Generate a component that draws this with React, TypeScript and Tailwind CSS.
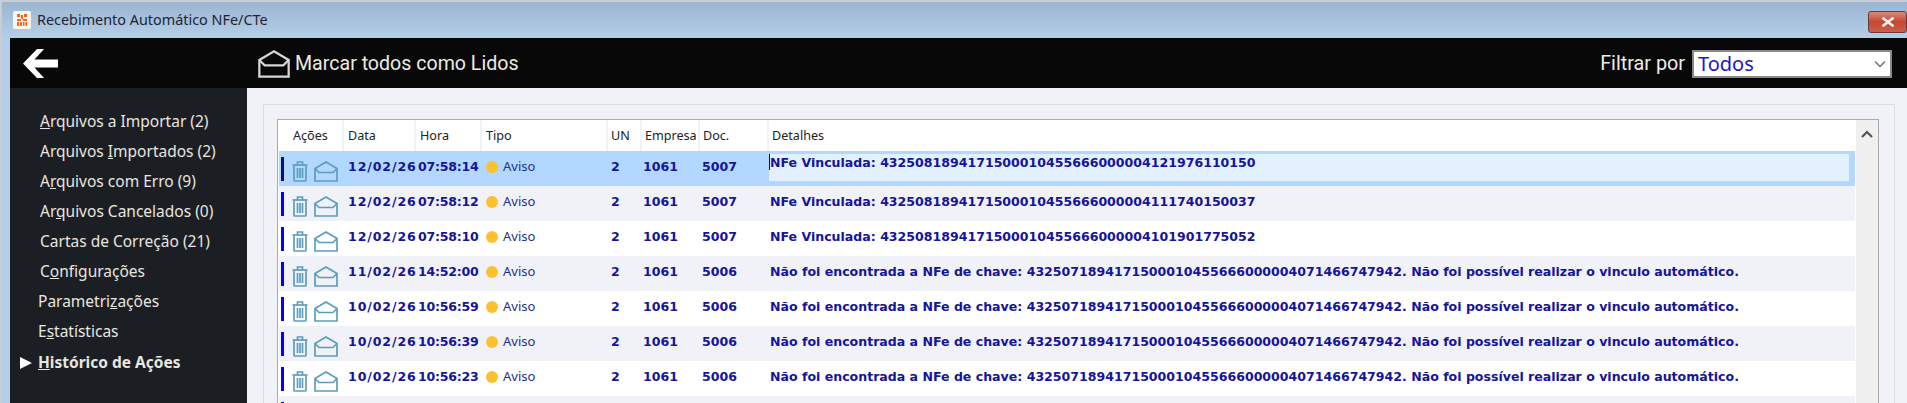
const MENU = [
  { pre: "", key: "A", post: "rquivos a Importar (2)", indent: "pl-[30px]" },
  { pre: "Arquivos ", key: "I", post: "mportados (2)", indent: "pl-[30px]" },
  { pre: "A", key: "r", post: "quivos com Erro (9)", indent: "pl-[30px]" },
  { pre: "Ar", key: "q", post: "uivos Cancelados (0)", indent: "pl-[30px]" },
  { pre: "Cartas de Correção (21)", key: "", post: "", indent: "pl-[30px]" },
  { pre: "C", key: "o", post: "nfigurações", indent: "pl-[30px]" },
  { pre: "Parametri", key: "z", post: "ações", indent: "pl-[28px]" },
  { pre: "E", key: "s", post: "tatísticas", indent: "pl-[28px]" },
];

const LONG = "Não foi encontrada a NFe de chave: 4325071894171500010455666000004071466747942. Não foi possível realizar o vinculo automático.";

const ROWS = [
  { date: "12/02/26", time: "07:58:14", doc: "5007", text: "NFe Vinculada: 4325081894171500010455666000004121976110150" },
  { date: "12/02/26", time: "07:58:12", doc: "5007", text: "NFe Vinculada: 4325081894171500010455666000004111740150037" },
  { date: "12/02/26", time: "07:58:10", doc: "5007", text: "NFe Vinculada: 4325081894171500010455666000004101901775052" },
  { date: "11/02/26", time: "14:52:00", doc: "5006", text: LONG },
  { date: "10/02/26", time: "10:56:59", doc: "5006", text: LONG },
  { date: "10/02/26", time: "10:56:39", doc: "5006", text: LONG },
  { date: "10/02/26", time: "10:56:23", doc: "5006", text: LONG },
];

const COLS = "grid grid-cols-[65px_72px_66px_126px_34px_58px_69px_1fr]";

function OpenEnvelope({ className }: { className: string }) {
  return (
    <svg viewBox="0 0 24 21" fill="none" stroke="currentColor" strokeWidth="1.7" className={className}>
      <path d="M1 7.5 L12 1 L23 7.5 V20 H1 Z" />
      <path d="M1 7.5 L5 11.5 H19 L23 7.5" />
    </svg>
  );
}

function Trash() {
  return (
    <svg viewBox="0 0 16 21" fill="none" stroke="currentColor" strokeWidth="1.7" className="h-[21px] w-4 text-[#5c9dbd]">
      <path d="M0.5 4 H15.5" />
      <path d="M5.5 4 V1 H10.5 V4" />
      <path d="M2 4.5 V19 Q2 20 3 20 H13 Q14 20 14 19 V4.5" />
      <path d="M5.5 7 V17 M8 7 V17 M10.5 7 V17" strokeWidth="1.7" />
    </svg>
  );
}

function Row({ row, index }: { row: (typeof ROWS)[number]; index: number }) {
  const selected = index === 0;
  const bg = selected ? "bg-[#b3d8ff]" : index % 2 === 1 ? "bg-[#f1f2f8]" : "bg-white";

  return (
    <div className={`${COLS} h-[35px] shrink-0 items-center pb-[3px] font-['DejaVu_Sans',sans-serif] text-[12.55px] font-bold text-[#14149c] ${bg}`}>
      <div className="flex h-[32px] items-start pl-[2px] pt-[6px]">
        <span className={`h-6 w-[3px] ${selected ? "bg-[#0c0c80]" : "bg-[#0000ff]"}`} />
        <div className="ml-2 mt-1 flex items-start gap-[6px]">
          <Trash />
          <OpenEnvelope className="h-[21px] w-6 text-[#5c9dbd]" />
        </div>
      </div>
      <span className="pl-1 tracking-[0.9px]">{row.date}</span>
      <span className="pl-[2px] tracking-[-0.25px]">{row.time}</span>
      <div className="flex items-center pl-1 font-['Noto_Sans',sans-serif] text-[13px] font-normal text-[#23308c]">
        <span className="h-3 w-3 rounded-full bg-[#fdc02f]" />
        <span className="ml-[5px]">Aviso</span>
      </div>
      <span className="pl-[3px]">2</span>
      <span className="pl-[1px]">1061</span>
      <span className="pl-[2px]">{row.doc}</span>
      {selected ? (
        <div className="relative mr-[6px] h-[27px] self-center bg-[#e3f0fd] pl-[1px] leading-[18px]">
          <span className="absolute left-0 top-0 h-4 w-px bg-[#111]" />
          {row.text}
        </div>
      ) : (
        <span className="pl-[1px]">{row.text}</span>
      )}
    </div>
  );
}

export default function App() {
  return (
    <div className="flex h-[403px] w-full flex-col overflow-hidden border-l-2 border-t-2 border-[#c9ccd1] bg-[#b6cfe8] font-['Noto_Sans',sans-serif]">
      {/* Title bar */}
      <div className="flex h-9 shrink-0 items-center bg-gradient-to-b from-[#9bb5d1] to-[#b5cfe9] pl-[11px]">
        <div className="flex h-[18px] w-[18px] items-center justify-center rounded-[2px] bg-[#fbf5ef]">
          <svg viewBox="0 0 12 14" className="h-[14px] w-3" fill="#f4661b">
            <path d="M1 1h3v3H1zM8 1h3v3H8zM5 2h2v4H5zM1 6h4v2H1zM7 6h4v2H7zM1 9h2v4H1zM4 9h2v4H4zM7 9h1.5v4H7zM9.5 9H11v4H9.5z" />
          </svg>
        </div>
        <span className="ml-[6px] text-[14.4px] text-[#1c2533]">Recebimento Automático NFe/CTe</span>
        <div className="ml-auto mb-[4px] mt-[8px] flex h-[22px] w-[39px] items-center justify-center rounded-[3px] border border-[#6b3b3b] bg-gradient-to-b from-[#d98a78] via-[#c4472f] to-[#c9604c]">
          <svg viewBox="0 0 14 10" className="h-[10px] w-[14px]" stroke="#f4f1ef" strokeWidth="2.6" strokeLinecap="square">
            <path d="M2.5 1.5 L11.5 8.5 M11.5 1.5 L2.5 8.5" />
          </svg>
        </div>
      </div>

      <div className="flex min-h-0 flex-1 flex-col pl-2">
        {/* Toolbar */}
        <div className="flex h-[50px] shrink-0 items-center bg-[#080808] pt-px text-[#ecebe6]">
          <svg viewBox="0 0 35 29" className="ml-[13px] h-[29px] w-[35px]" fill="#ffffff">
            <path d="M0 14.5 L14 0 H21 L11.5 10.5 H35 V18.5 H11.5 L21 29 H14 Z" />
          </svg>
          <OpenEnvelope className="ml-[200px] h-[28px] w-8 text-[#d6d6d6]" />
          <span className="ml-[5px] font-['Roboto',sans-serif] text-[19.6px]">Marcar todos como Lidos</span>
          <span className="ml-auto font-['Roboto',sans-serif] text-[19.8px]">Filtrar por</span>
          <div className="ml-[7px] mr-[15px] flex h-7 w-[200px] items-center justify-between border-2 border-[#8a8a8a] bg-white pl-[4px] pr-[4px] text-[20px] text-[#2412c8]">
            <span>Todos</span>
            <svg viewBox="0 0 12 8" fill="none" stroke="#777" strokeWidth="1.5" className="h-2 w-3">
              <path d="M1 1.5 L6 6.5 L11 1.5" />
            </svg>
          </div>
        </div>

        <div className="flex min-h-0 flex-1">
          {/* Sidebar */}
          <nav className="w-[237px] shrink-0 bg-[#1b1e23] pt-[19px] text-[15.5px] text-[#e8e6e0]">
            {MENU.map((m) => (
              <div key={m.pre + m.key} className={`flex h-[30px] items-center ${m.indent}`}>
                <span>
                  {m.pre}
                  {m.key && <u>{m.key}</u>}
                  {m.post}
                </span>
              </div>
            ))}
            <div className="mt-px flex h-[30px] items-center pl-[10px] font-bold">
              <span className="mr-[6px] h-0 w-0 border-y-[6px] border-l-[12px] border-y-transparent border-l-white" />
              <span>
                <u>H</u>istórico de Ações
              </span>
            </div>
          </nav>

          {/* Content */}
          <main className="min-w-0 flex-1 bg-[#f1f2f8] pl-4 pr-3 pt-4">
            <div className="h-[400px] border border-[#dcdce4] pl-[13px] pr-[15px] pt-[14px]">
              <div className="flex h-[380px] border border-[#a9a9b1] bg-white pl-px">
                <div className="flex min-w-0 flex-1 flex-col">
                  <div className={`${COLS} h-[31px] shrink-0 items-center text-[12.6px] text-[#222]`}>
                    <span className="h-full border-r-2 border-[#f1f2f6] pl-[14px] leading-[31px]">Ações</span>
                    <span className="h-full border-r-2 border-[#f1f2f6] pl-1 leading-[31px]">Data</span>
                    <span className="h-full border-r-2 border-[#f1f2f6] pl-1 leading-[31px]">Hora</span>
                    <span className="h-full border-r-2 border-[#f1f2f6] pl-1 leading-[31px]">Tipo</span>
                    <span className="h-full border-r-2 border-[#f1f2f6] pl-[3px] leading-[31px]">UN</span>
                    <span className="h-full border-r-2 border-[#f1f2f6] pl-[3px] leading-[31px]">Empresa</span>
                    <span className="h-full border-r-2 border-[#f1f2f6] pl-[3px] leading-[31px]">Doc.</span>
                    <span className="h-full pl-[3px] leading-[31px]">Detalhes</span>
                  </div>
                  {ROWS.map((row, i) => (
                    <Row key={row.time} row={row} index={i} />
                  ))}
                  {/* next row, only its marker shows above the window edge */}
                  <div className="h-[35px] shrink-0 bg-[#f1f2f8] pl-[2px] pt-[6px]">
                    <div className="h-6 w-[3px] bg-[#0000ff]" />
                  </div>
                </div>
                {/* Scrollbar */}
                <div className="flex w-[23px] shrink-0 justify-center border-l border-white bg-[#f0f0f0] pt-[10px]">
                  <svg viewBox="0 0 12 8" fill="none" stroke="#555" strokeWidth="2.2" className="h-2 w-3">
                    <path d="M1 7 L6 2 L11 7" />
                  </svg>
                </div>
              </div>
            </div>
          </main>
        </div>
      </div>
    </div>
  );
}
